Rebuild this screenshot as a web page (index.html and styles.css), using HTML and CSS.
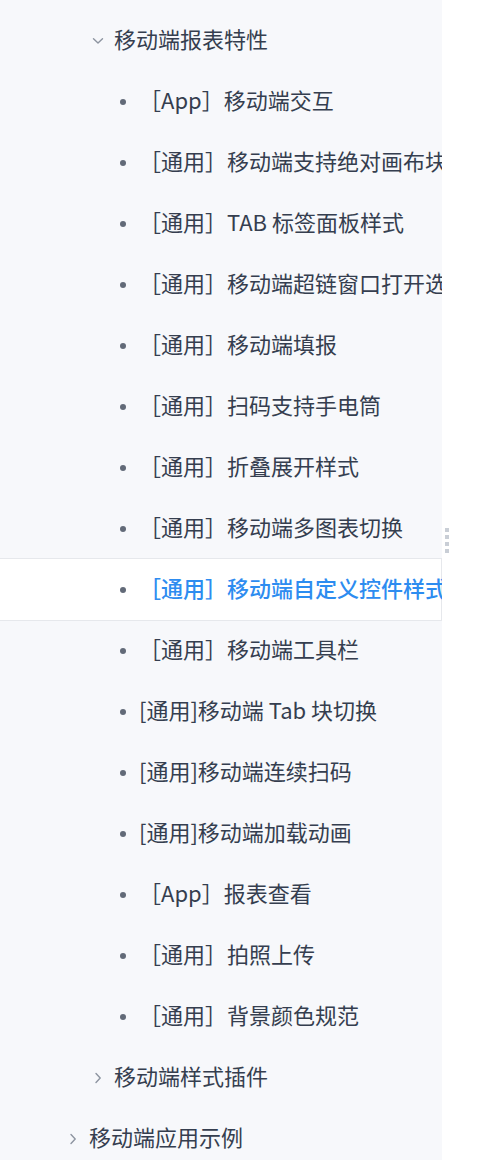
FILE: index.html
```
<!DOCTYPE html>
<html lang="zh-CN">
<head>
  <meta charset="UTF-8" />
  <meta name="viewport" content="width=device-width, initial-scale=1.0"/>
  <title>移动端报表特性</title>
  <link rel="stylesheet" href="styles.css">
</head>
<body>
  <div class="layout">
    <!-- Sidebar tree -->
    <nav class="sidebar">
      <ul class="tree">
        <li class="node lv2">
          <span class="icon"><svg width="12" height="8" viewBox="0 0 12 8"><path d="M1.5 1.8 6 6 10.5 1.8" fill="none" stroke="#8d94a0" stroke-width="1.4" stroke-linecap="round" stroke-linejoin="round"/></svg></span>
          <span class="label">移动端报表特性</span>
        </li>
        <li class="node lv3"><span class="icon"><i class="dot"></i></span><span class="label">［App］移动端交互</span></li>
        <li class="node lv3"><span class="icon"><i class="dot"></i></span><span class="label">［通用］移动端支持绝对画布块</span></li>
        <li class="node lv3"><span class="icon"><i class="dot"></i></span><span class="label">［通用］TAB 标签面板样式</span></li>
        <li class="node lv3"><span class="icon"><i class="dot"></i></span><span class="label">［通用］移动端超链窗口打开选项</span></li>
        <li class="node lv3"><span class="icon"><i class="dot"></i></span><span class="label">［通用］移动端填报</span></li>
        <li class="node lv3"><span class="icon"><i class="dot"></i></span><span class="label">［通用］扫码支持手电筒</span></li>
        <li class="node lv3"><span class="icon"><i class="dot"></i></span><span class="label">［通用］折叠展开样式</span></li>
        <li class="node lv3"><span class="icon"><i class="dot"></i></span><span class="label">［通用］移动端多图表切换</span></li>
        <li class="node lv3 active"><span class="icon"><i class="dot"></i></span><span class="label">［通用］移动端自定义控件样式</span></li>
        <li class="node lv3"><span class="icon"><i class="dot"></i></span><span class="label">［通用］移动端工具栏</span></li>
        <li class="node lv3"><span class="icon"><i class="dot"></i></span><span class="label">[通用]移动端 Tab 块切换</span></li>
        <li class="node lv3"><span class="icon"><i class="dot"></i></span><span class="label">[通用]移动端连续扫码</span></li>
        <li class="node lv3"><span class="icon"><i class="dot"></i></span><span class="label">[通用]移动端加载动画</span></li>
        <li class="node lv3"><span class="icon"><i class="dot"></i></span><span class="label">［App］报表查看</span></li>
        <li class="node lv3"><span class="icon"><i class="dot"></i></span><span class="label">［通用］拍照上传</span></li>
        <li class="node lv3"><span class="icon"><i class="dot"></i></span><span class="label">［通用］背景颜色规范</span></li>
        <li class="node lv2">
          <span class="icon"><svg width="12" height="12" viewBox="0 0 12 12"><path d="M4 1.5 8.2 6 4 10.5" fill="none" stroke="#8d94a0" stroke-width="1.4" stroke-linecap="round" stroke-linejoin="round"/></svg></span>
          <span class="label">移动端样式插件</span>
        </li>
        <li class="node lv1">
          <span class="icon"><svg width="12" height="12" viewBox="0 0 12 12"><path d="M4 1.5 8.2 6 4 10.5" fill="none" stroke="#8d94a0" stroke-width="1.4" stroke-linecap="round" stroke-linejoin="round"/></svg></span>
          <span class="label">移动端应用示例</span>
        </li>
      </ul>
    </nav>

    <!-- Resize handle -->
    <div class="resizer"><i></i><i></i><i></i><i></i></div>

    <main class="content"></main>
  </div>
</body>
</html>
```

FILE: styles.css
```
html, body {
  margin: 0;
  padding: 0;
  background: #ffffff;
  font-family: "Noto Sans CJK SC", "Noto Sans", sans-serif;
  color: #353e4f;
}

.layout {
  display: flex;
  height: 1160px;
  position: relative;
  overflow: hidden;
}

.sidebar {
  width: 442px;
  flex: none;
  background: #f7f8fb;
  overflow: hidden;
}

.tree {
  list-style: none;
  margin: 0;
  padding: 10px 0 0;
}

.node {
  display: flex;
  align-items: center;
  gap: 10px;
  height: 61px;
  box-sizing: border-box;
  font-size: 22px;
  white-space: nowrap;
}

.lv1 { padding-left: 67px; }
.lv2 { padding-left: 92px; }
.lv3 { padding-left: 117px; }

.icon {
  width: 12px;
  flex: none;
  display: flex;
  align-items: center;
  justify-content: center;
}

.dot {
  width: 6px;
  height: 6px;
  border-radius: 50%;
  background: #626a78;
}

.label {
  line-height: 1;
  position: relative;
  top: -3px;
}

.node.active {
  background: #ffffff;
  border: 1px solid #e6e8ec;
  border-left: none;
  margin: -1px 0;
  height: 63px;
  color: #2d8cf0;
  font-weight: 500;
}

.resizer {
  position: absolute;
  left: 445px;
  top: 528px;
  display: flex;
  flex-direction: column;
  gap: 3px;
}

.resizer i {
  width: 4px;
  height: 4px;
  background: #c9ced6;
}

.content {
  flex: 1;
}
```
